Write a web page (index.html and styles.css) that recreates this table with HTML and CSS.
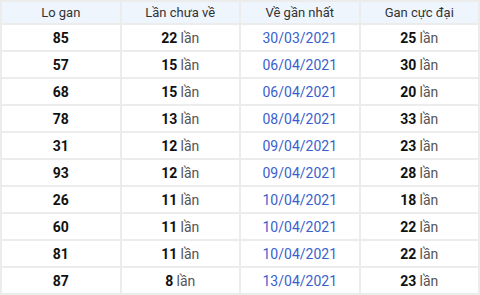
FILE: index.html
```html
<!doctype html>
<html lang="vi">
  <head>
    <meta charset="UTF-8" />
    <title>Lo gan</title>
    <link rel="stylesheet" href="styles.css">
  </head>
  <body>
    <table class="gan-table">
      <thead>
        <tr>
          <th>Lo gan</th>
          <th>Lần chưa về</th>
          <th>Về gần nhất</th>
          <th>Gan cực đại</th>
        </tr>
      </thead>
      <tbody>
        <tr><td class="num">85</td><td><b>22</b> <span class="unit">lần</span></td><td class="date">30/03/2021</td><td><b>25</b> <span class="unit">lần</span></td></tr>
        <tr><td class="num">57</td><td><b>15</b> <span class="unit">lần</span></td><td class="date">06/04/2021</td><td><b>30</b> <span class="unit">lần</span></td></tr>
        <tr><td class="num">68</td><td><b>15</b> <span class="unit">lần</span></td><td class="date">06/04/2021</td><td><b>20</b> <span class="unit">lần</span></td></tr>
        <tr><td class="num">78</td><td><b>13</b> <span class="unit">lần</span></td><td class="date">08/04/2021</td><td><b>33</b> <span class="unit">lần</span></td></tr>
        <tr><td class="num">31</td><td><b>12</b> <span class="unit">lần</span></td><td class="date">09/04/2021</td><td><b>23</b> <span class="unit">lần</span></td></tr>
        <tr><td class="num">93</td><td><b>12</b> <span class="unit">lần</span></td><td class="date">09/04/2021</td><td><b>28</b> <span class="unit">lần</span></td></tr>
        <tr><td class="num">26</td><td><b>11</b> <span class="unit">lần</span></td><td class="date">10/04/2021</td><td><b>18</b> <span class="unit">lần</span></td></tr>
        <tr><td class="num">60</td><td><b>11</b> <span class="unit">lần</span></td><td class="date">10/04/2021</td><td><b>22</b> <span class="unit">lần</span></td></tr>
        <tr><td class="num">81</td><td><b>11</b> <span class="unit">lần</span></td><td class="date">10/04/2021</td><td><b>22</b> <span class="unit">lần</span></td></tr>
        <tr><td class="num">87</td><td><b>8</b> <span class="unit">lần</span></td><td class="date">13/04/2021</td><td><b>23</b> <span class="unit">lần</span></td></tr>
      </tbody>
    </table>
  </body>
</html>
```

FILE: styles.css
```css
body {
  margin: 0;
  background: #fff;
  font-family: Roboto, "Liberation Sans", sans-serif;
  font-size: 13px;
  color: #222;
}

.gan-table {
  width: 480px;
  border-collapse: collapse;
  table-layout: fixed;
}

.gan-table th,
.gan-table td {
  border: 2px solid #ececec;
  text-align: center;
  padding: 0;
}

.gan-table th {
  height: 21px;
  background-color: #eef5fd;
  font-weight: normal;
  color: #333;
}

.gan-table td {
  height: 25px;
}

.num,
.gan-table b {
  font-weight: bold;
  font-size: 14px;
  color: #111;
}

.unit {
  color: #555;
  font-size: 14px;
}

.date {
  color: #3a5fcd;
  font-size: 14px;
}
```
